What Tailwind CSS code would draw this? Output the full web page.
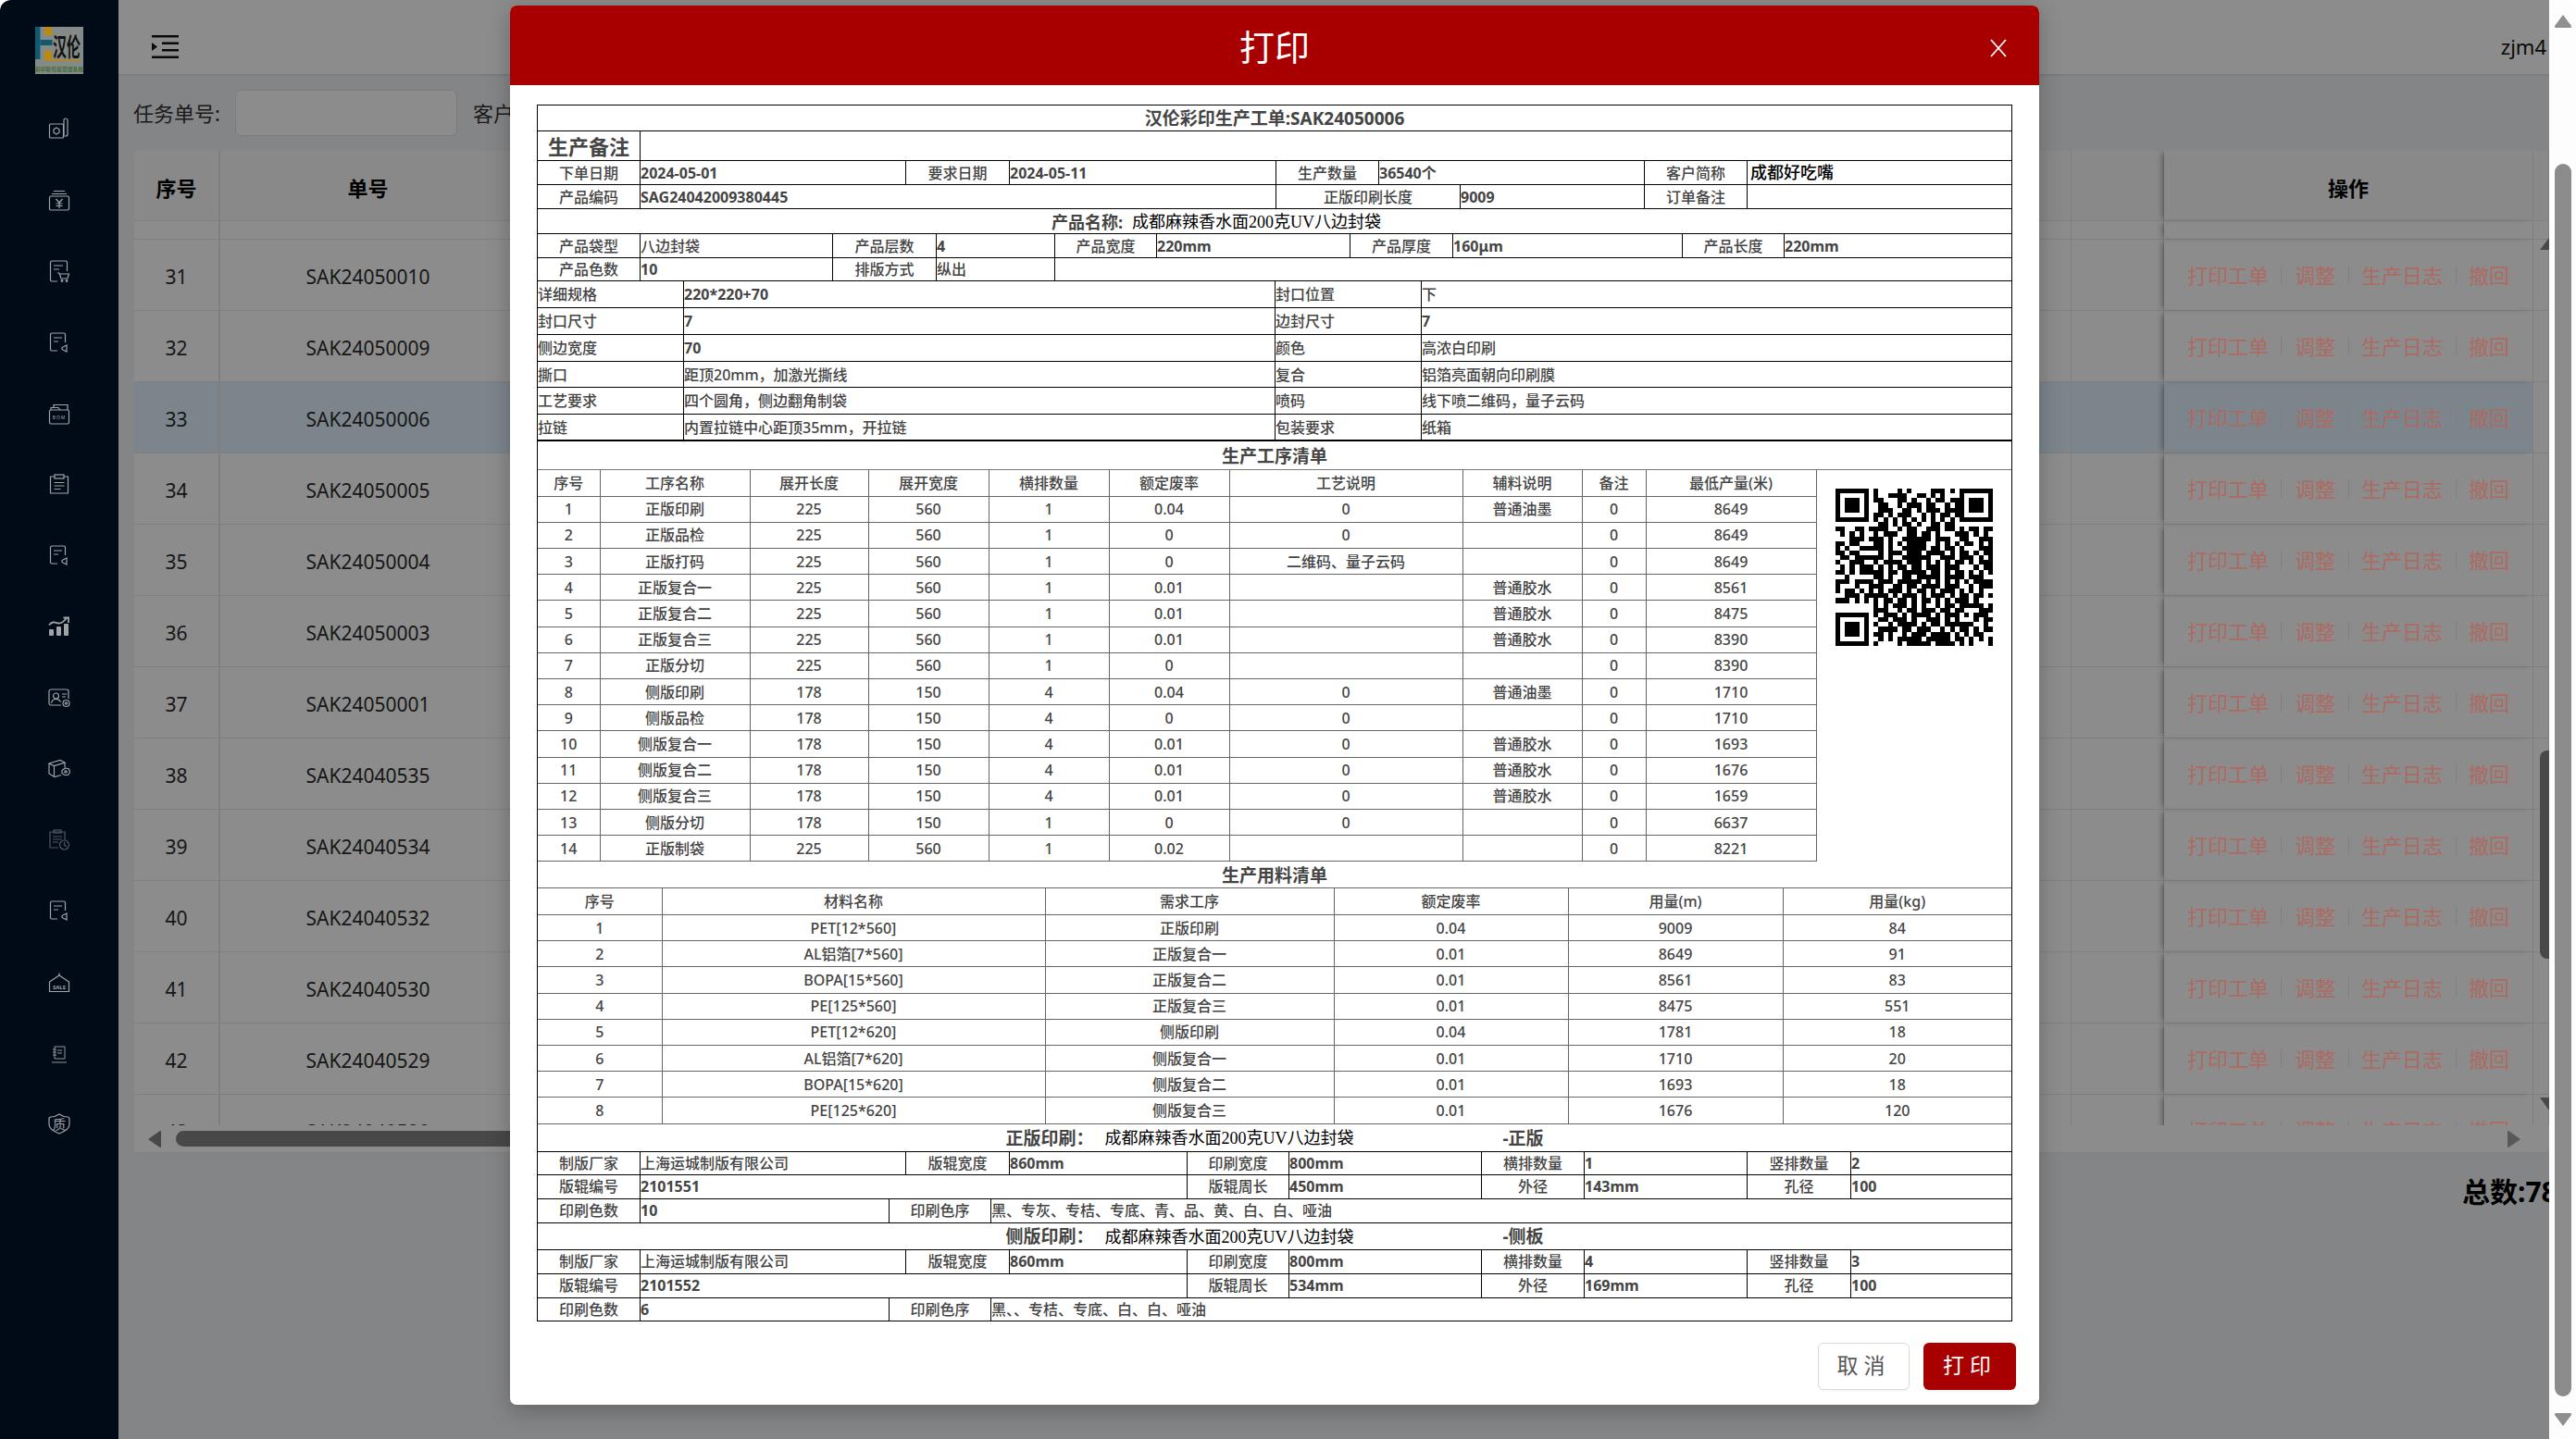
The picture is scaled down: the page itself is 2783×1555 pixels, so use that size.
<!DOCTYPE html>
<html lang="zh-CN">
<head>
<meta charset="UTF-8">
<title>打印</title>
<script src="https://cdn.jsdelivr.net/npm/@tailwindcss/browser@4"></script>
</head>
<body class="bg-white overflow-hidden font-['Noto_Sans','Noto_Sans_CJK_SC',sans-serif]">
<div class="relative flex h-[1555px] w-[2783px] overflow-hidden rounded-tl-[12px] rounded-r-[12px] bg-white">

  <!-- Sidebar -->
  <aside class="flex w-[128px] shrink-0 flex-col items-center bg-[#000b17] pt-[29px]">
    <svg class="h-[51px] w-[52px] shrink-0" viewBox="0 0 52 51">
      <rect width="52" height="51" fill="#868a86"/>
      <rect width="5.500" height="35" fill="#0f5a72"/>
      <rect x="5.500" y="14" width="13" height="6" fill="#0f5a72"/>
      <rect x="10" width="8" height="9" fill="#b98a10"/>
      <rect x="10" y="26" width="8" height="10" fill="#b98a10"/>
      <rect x="10" y="35" width="39" height="1.500" fill="#b98a10"/>
      <text font-size="15" font-weight="700" fill="#111" transform="scale(1 1.800)"><tspan x="19" y="18">汉伦</tspan></text>
      <text x="0" y="48" font-size="5.700" font-weight="700" fill="#3f6d36" textLength="52">彩印软包装管理系统</text>
    </svg>

    <div class="mt-[21px] flex flex-col items-center text-white [&>svg]:my-[26.4px] [&>svg]:h-[24px] [&>svg]:w-[24px] [&>svg]:fill-none [&>svg]:stroke-[#a0a4a8] [&>svg]:stroke-[1.200]">
      <svg viewBox="0 0 24 24"><rect x="1.500" y="7" width="15" height="15" rx="1"/><path d="M16 20h3a2 2 0 0 0 2-2V3a2 2 0 0 0-4 0v16"/><path d="M9 11l3 1.800v3.400L9 18l-3-1.800v-3.400z"/></svg>
      <svg viewBox="0 0 24 24"><rect x="1.500" y="8" width="21" height="15" rx="1.500"/><path d="M4 5.500h16M6 2.500h12"/><path d="M8.500 11l3.500 4 3.500-4M12 15v6M8.500 16h7M8.500 18.500h7"/></svg>
      <svg viewBox="0 0 24 24"><path d="M10 23H4a1.500 1.500 0 0 1-1.500-1.500v-19A1.500 1.500 0 0 1 4 1h15a1.500 1.500 0 0 1 1.500 1.500V12"/><path d="M6 6h10M6 10h6"/><path d="M10 14h2l2 6h7l1.500-5H12.500"/><circle cx="15" cy="22.500" r=".8"/><circle cx="20" cy="22.500" r=".8"/></svg>
      <svg viewBox="0 0 24 24"><path d="M10 21H4a1.500 1.500 0 0 1-1.500-1.500v-16A1.500 1.500 0 0 1 4 2h13a1.500 1.500 0 0 1 1.500 1.500V12"/><path d="M6 7h9M6 11h5"/><path d="M20 15v7l-5-2.500v-2z"/></svg>
      <svg viewBox="0 0 24 24"><rect x="1.500" y="8" width="21" height="15" rx="1.500"/><path d="M3 8V5.500h8l2 2.500M6 5V2.500h15V8"/><text x="12" y="18" font-size="5" text-anchor="middle" fill="#a0a4a8" stroke="none" letter-spacing="1">BOM</text></svg>
      <svg viewBox="0 0 24 24"><path d="M7 4H2.500v18h19V4H17"/><rect x="7" y="2" width="10" height="4"/><path d="M6.500 10.500h11M6.500 14h11M6.500 17.500h7"/></svg>
      <svg viewBox="0 0 24 24"><path d="M10 21H4a1.500 1.500 0 0 1-1.500-1.500v-16A1.500 1.500 0 0 1 4 2h13a1.500 1.500 0 0 1 1.500 1.500V12"/><path d="M6 7h9M6 11h5"/><path d="M20 15v7l-5-2.500v-2z"/></svg>
      <svg viewBox="0 0 24 24"><path d="M1 10.500C5 5.500 8 8 11 8.500s6-2 9-5.500M16.500 2.500H22V8" stroke-width="1.800"/><rect x="1" y="15" width="5" height="7" rx="1" stroke="none" fill="#a0a4a8"/><rect x="9" y="12" width="5" height="10" rx="1" stroke="none" fill="#a0a4a8"/><rect x="17" y="9" width="5" height="13" rx="1" stroke="none" fill="#a0a4a8"/></svg>
      <svg viewBox="0 0 24 24"><path d="M14 20H3a2 2 0 0 1-2-2V5a2 2 0 0 1 2-2h17a2 2 0 0 1 2 2v8"/><circle cx="8.500" cy="10" r="3"/><path d="M3.500 18c.5-3 2.500-4.500 5-4.500s4 1 5 3M15 8h5M15 11h4"/><circle cx="19.500" cy="18" r="3.500"/><circle cx="19.500" cy="18" r="1.200"/></svg>
      <svg viewBox="0 0 24 24"><path d="M1 7l12-3.500 5 2.500-11.500 3.500L1 7zM1 7v11l6 3.500 7-2M6.500 9.500v12M18 6v5"/><path d="M15 14.500l3.500-2.500 4 1 1 3.500-2 3h-4l-2.500-2z"/><circle cx="19" cy="16" r="1.200"/></svg>
      <svg viewBox="0 0 24 24" class="opacity-50"><path d="M11 21H2V4h16v9"/><rect x="6" y="2" width="8" height="3"/><path d="M5 9h10M5 12h10M5 15h6"/><circle cx="17.500" cy="18" r="5"/><path d="M17.500 15v3l2.500 2"/></svg>
      <svg viewBox="0 0 24 24"><path d="M10 21H4a1.500 1.500 0 0 1-1.500-1.500v-16A1.500 1.500 0 0 1 4 2h13a1.500 1.500 0 0 1 1.500 1.500V12"/><path d="M6 7h9M6 11h5"/><path d="M20 15v7l-5-2.500v-2z"/></svg>
      <svg viewBox="0 0 24 24"><path d="M1.500 12l10.500-7 10.500 7v10.500h-21z"/><path d="M12 5V2.500"/><text x="12" y="20" font-size="6" font-weight="700" text-anchor="middle" fill="#a0a4a8" stroke="none">SALE</text></svg>
      <svg viewBox="0 0 24 24"><path d="M7 5h11v13H7zM5 8h4M5 11h4M5 14h4M10 9h5M10 12h5M4 22h16" stroke-width=".9"/></svg>
      <svg viewBox="0 0 24 24"><path d="M3 5c3 0 6-1 9-3 3 2 6 3 9 3 2 0 2 1 2 3v5c0 5-6 8-11 10C7 21 1 18 1 13V8c0-2 0-3 2-3z"/><text x="12" y="17.500" font-size="14" text-anchor="middle" fill="#a0a4a8" stroke="none">质</text></svg>
    </div>
  </aside>

  <!-- Main page, dimmed by the modal mask -->
  <main class="flex h-full w-[2626px] shrink-0 flex-col overflow-hidden bg-[#848586]">
    <header class="flex h-[80px] shrink-0 items-center justify-between bg-[#8c8c8c] pl-[36px] pr-[3px] pt-[20px] shadow-[0_1px_3px_rgba(0,0,0,0.12)]">
      <svg class="h-[25px] w-[29px]" viewBox="0 0 29 25" fill="#0a0a0a">
        <rect width="29" height="2.500"/><rect x="11" y="7.500" width="18" height="2.500"/><rect x="11" y="15" width="18" height="2.500"/><rect y="22.500" width="29" height="2.500"/><path d="M0 8l6 4.500L0 17z"/>
      </svg>
      <span class="text-[22px] text-[#0a0a0a]">zjm4</span>
    </header>

    <div class="flex h-[83px] shrink-0 items-start pl-[16px] pt-[17px] text-[22px] text-[#1a1a1a]">
      <label class="flex h-[50px] items-center">任务单号:</label>
      <input class="ml-[16px] h-[50px] w-[240px] rounded-[6px] border border-[#7a7b7c] bg-[#8c8c8c]">
      <label class="ml-[17px] flex h-[50px] items-center">客户名称:</label>
    </div>

    <section class="relative ml-[17px] h-[1083px] w-[2609px] shrink-0 border-b border-[#7f8081] bg-[#8c8c8c]">
      <div class="h-[1053px] overflow-hidden text-[21px] text-[#161616] [&>div]:grid [&>div]:grid-cols-[93px_320px_1680px_100px_399px_17px] [&>div>div]:flex [&>div>div]:items-center [&>div>div]:justify-center [&>div>div]:border-b [&>div>div]:border-r [&>div>div]:border-[#7f7f7f] [&>div>div:first-child]:border-r-[2px] [&>div>div:nth-child(-n+2)]:pt-[6px]">
        <div class="h-[76px] bg-[#898989] text-[22px] font-bold text-black">
          <div>序号</div><div>单号</div><div></div><div></div><div class="pt-[6px] shadow-[-5px_0_6px_-3px_rgba(0,0,0,0.35)]">操作</div><div></div>
        </div>
        <div class="h-[20px]"><div></div><div></div><div></div><div></div><div class="shadow-[-5px_0_6px_-3px_rgba(0,0,0,0.35)]"></div><div></div></div>
        <div class="h-[77px]"><div>31</div><div>SAK24050010</div><div></div><div></div><div class="shadow-[-5px_0_6px_-3px_rgba(0,0,0,0.35)] text-[22px] text-[#ad6a62] [&>i]:mx-[13.5px] [&>i]:h-[20px] [&>i]:w-px [&>i]:bg-[#7f7f7f]"><span>打印工单</span><i></i><span>调整</span><i></i><span>生产日志</span><i></i><span>撤回</span></div><div></div></div>
        <div class="h-[77px]"><div>32</div><div>SAK24050009</div><div></div><div></div><div class="shadow-[-5px_0_6px_-3px_rgba(0,0,0,0.35)] text-[22px] text-[#ad6a62] [&>i]:mx-[13.5px] [&>i]:h-[20px] [&>i]:w-px [&>i]:bg-[#7f7f7f]"><span>打印工单</span><i></i><span>调整</span><i></i><span>生产日志</span><i></i><span>撤回</span></div><div></div></div>
        <div class="h-[77px] bg-[#7c858c]"><div>33</div><div>SAK24050006</div><div></div><div></div><div class="shadow-[-5px_0_6px_-3px_rgba(0,0,0,0.35)] text-[22px] text-[#ad6a62] [&>i]:mx-[13.5px] [&>i]:h-[20px] [&>i]:w-px [&>i]:bg-[#7f7f7f]"><span>打印工单</span><i></i><span>调整</span><i></i><span>生产日志</span><i></i><span>撤回</span></div><div class="bg-[#8c8c8c]"></div></div>
        <div class="h-[77px]"><div>34</div><div>SAK24050005</div><div></div><div></div><div class="shadow-[-5px_0_6px_-3px_rgba(0,0,0,0.35)] text-[22px] text-[#ad6a62] [&>i]:mx-[13.5px] [&>i]:h-[20px] [&>i]:w-px [&>i]:bg-[#7f7f7f]"><span>打印工单</span><i></i><span>调整</span><i></i><span>生产日志</span><i></i><span>撤回</span></div><div></div></div>
        <div class="h-[77px]"><div>35</div><div>SAK24050004</div><div></div><div></div><div class="shadow-[-5px_0_6px_-3px_rgba(0,0,0,0.35)] text-[22px] text-[#ad6a62] [&>i]:mx-[13.5px] [&>i]:h-[20px] [&>i]:w-px [&>i]:bg-[#7f7f7f]"><span>打印工单</span><i></i><span>调整</span><i></i><span>生产日志</span><i></i><span>撤回</span></div><div></div></div>
        <div class="h-[77px]"><div>36</div><div>SAK24050003</div><div></div><div></div><div class="shadow-[-5px_0_6px_-3px_rgba(0,0,0,0.35)] text-[22px] text-[#ad6a62] [&>i]:mx-[13.5px] [&>i]:h-[20px] [&>i]:w-px [&>i]:bg-[#7f7f7f]"><span>打印工单</span><i></i><span>调整</span><i></i><span>生产日志</span><i></i><span>撤回</span></div><div></div></div>
        <div class="h-[77px]"><div>37</div><div>SAK24050001</div><div></div><div></div><div class="shadow-[-5px_0_6px_-3px_rgba(0,0,0,0.35)] text-[22px] text-[#ad6a62] [&>i]:mx-[13.5px] [&>i]:h-[20px] [&>i]:w-px [&>i]:bg-[#7f7f7f]"><span>打印工单</span><i></i><span>调整</span><i></i><span>生产日志</span><i></i><span>撤回</span></div><div></div></div>
        <div class="h-[77px]"><div>38</div><div>SAK24040535</div><div></div><div></div><div class="shadow-[-5px_0_6px_-3px_rgba(0,0,0,0.35)] text-[22px] text-[#ad6a62] [&>i]:mx-[13.5px] [&>i]:h-[20px] [&>i]:w-px [&>i]:bg-[#7f7f7f]"><span>打印工单</span><i></i><span>调整</span><i></i><span>生产日志</span><i></i><span>撤回</span></div><div></div></div>
        <div class="h-[77px]"><div>39</div><div>SAK24040534</div><div></div><div></div><div class="shadow-[-5px_0_6px_-3px_rgba(0,0,0,0.35)] text-[22px] text-[#ad6a62] [&>i]:mx-[13.5px] [&>i]:h-[20px] [&>i]:w-px [&>i]:bg-[#7f7f7f]"><span>打印工单</span><i></i><span>调整</span><i></i><span>生产日志</span><i></i><span>撤回</span></div><div></div></div>
        <div class="h-[77px]"><div>40</div><div>SAK24040532</div><div></div><div></div><div class="shadow-[-5px_0_6px_-3px_rgba(0,0,0,0.35)] text-[22px] text-[#ad6a62] [&>i]:mx-[13.5px] [&>i]:h-[20px] [&>i]:w-px [&>i]:bg-[#7f7f7f]"><span>打印工单</span><i></i><span>调整</span><i></i><span>生产日志</span><i></i><span>撤回</span></div><div></div></div>
        <div class="h-[77px]"><div>41</div><div>SAK24040530</div><div></div><div></div><div class="shadow-[-5px_0_6px_-3px_rgba(0,0,0,0.35)] text-[22px] text-[#ad6a62] [&>i]:mx-[13.5px] [&>i]:h-[20px] [&>i]:w-px [&>i]:bg-[#7f7f7f]"><span>打印工单</span><i></i><span>调整</span><i></i><span>生产日志</span><i></i><span>撤回</span></div><div></div></div>
        <div class="h-[77px]"><div>42</div><div>SAK24040529</div><div></div><div></div><div class="shadow-[-5px_0_6px_-3px_rgba(0,0,0,0.35)] text-[22px] text-[#ad6a62] [&>i]:mx-[13.5px] [&>i]:h-[20px] [&>i]:w-px [&>i]:bg-[#7f7f7f]"><span>打印工单</span><i></i><span>调整</span><i></i><span>生产日志</span><i></i><span>撤回</span></div><div></div></div>
        <div class="h-[77px]"><div>43</div><div>SAK24040528</div><div></div><div></div><div class="shadow-[-5px_0_6px_-3px_rgba(0,0,0,0.35)] text-[22px] text-[#ad6a62] [&>i]:mx-[13.5px] [&>i]:h-[20px] [&>i]:w-px [&>i]:bg-[#7f7f7f]"><span>打印工单</span><i></i><span>调整</span><i></i><span>生产日志</span><i></i><span>撤回</span></div><div></div></div>
      </div>

      <!-- table scrollbars -->
      <svg class="absolute left-[2599px] top-[94px] h-[13px] w-[10px]" viewBox="0 0 10 13"><path d="M0 13L10 0v13z" fill="#484848"/></svg>
      <div class="absolute left-[2599px] top-[648px] h-[225px] w-[10px] rounded-l-[8px] bg-[#484848]"></div>
      <svg class="absolute left-[2599px] top-[1023px] h-[14px] w-[10px]" viewBox="0 0 10 14"><path d="M0 0h10v14z" fill="#484848"/></svg>
      <div class="flex h-[29px] items-center pl-[15px]">
        <svg class="h-[18px] w-[14px]" viewBox="0 0 14 18"><path d="M14 1v16a1 1 0 0 1-1.500.8L0 9 12.500.2A1 1 0 0 1 14 1z" fill="#484848"/></svg>
        <div class="ml-[16px] h-[17px] w-[800px] rounded-full bg-[#484848]"></div>
        <svg class="ml-[1719px] h-[18px] w-[14px]" viewBox="0 0 14 18"><path d="M0 1v16a1 1 0 0 0 1.500.8L14 9 1.500.2A1 1 0 0 0 0 1z" fill="#585858"/></svg>
      </div>
    </section>

    <div class="flex shrink-0 justify-end overflow-hidden pt-[22px]">
      <span class="w-[94px] whitespace-nowrap text-[30px] font-bold leading-[40px] text-black">总数:78</span>
    </div>
  </main>

  <!-- Window scrollbar -->
  <div class="relative w-[29px] shrink-0 bg-[#fdfdfd]">
    <svg class="absolute left-[6px] top-[16px] h-[14px] w-[18px]" viewBox="0 0 18 14"><path d="M9 0l9 12q.5 2-1.500 2h-15q-2 0-1.500-2z" fill="#8f8f8f"/></svg>
    <div class="absolute left-[6px] top-[177px] h-[1332px] w-[18px] rounded-full bg-[#8c8c8c]"></div>
    <svg class="absolute left-[6px] top-[1527px] h-[14px] w-[18px]" viewBox="0 0 18 14"><path d="M9 14L0 2Q-.5 0 1.500 0h15q2 0 1.500 2z" fill="#8f8f8f"/></svg>
  </div>

  <!-- Print modal -->
  <div class="absolute left-[551px] top-[6px] h-[1512px] w-[1652px] overflow-hidden rounded-[7px] bg-white shadow-[0_6px_24px_rgba(0,0,0,0.25)]">
    <div class="relative flex h-[86px] items-center justify-center bg-[#a80000] pt-[3px] text-[38px] text-white">
      打印
      <svg class="absolute right-[35px] top-[36px] h-[20px] w-[18px]" viewBox="0 0 18 20" fill="none" stroke="#fff" stroke-width="1.800"><path d="M1 1l16 18M17 1L1 19"/></svg>
    </div>
    <div class="px-[29px] pt-[21px]">
      <div class="w-[1594px] border-x border-t border-black text-[16px] font-medium leading-none text-[#444] [&>div>div]:flex [&>div>div]:items-center [&>div>div]:border-r [&>div>div]:border-black [&>div>div:last-child]:border-r-0">
        <div class="grid h-[28px] grid-cols-1 border-b border-black"><div class="justify-center pt-[2px] text-[19px] font-bold text-[#444]">汉伦彩印生产工单:SAK24050006</div></div>
        <div class="grid h-[32px] grid-cols-[111px_1fr] border-b border-black"><div class="justify-center text-[22px] font-bold">生产备注</div><div></div></div>
        <div class="grid h-[26px] grid-cols-[111px_287px_112px_288px_111px_287px_111px_1fr] border-b border-black"><div class="justify-center">下单日期</div><div class="font-bold">2024-05-01</div><div class="justify-center">要求日期</div><div class="font-bold">2024-05-11</div><div class="justify-center">生产数量</div><div class="font-bold">36540个</div><div class="justify-center">客户简称</div><div class="pl-[3px] font-['Liberation_Serif','Noto_Sans_CJK_SC',serif] text-[18px] text-black">成都好吃嘴</div></div>
        <div class="grid h-[26px] grid-cols-[111px_687px_199px_199px_111px_1fr] border-b border-black"><div class="justify-center">产品编码</div><div class="font-bold">SAG24042009380445</div><div class="justify-center">正版印刷长度</div><div class="font-bold">9009</div><div class="justify-center">订单备注</div><div></div></div>
        <div class="grid h-[27px] grid-cols-1 border-b border-black"><div class="justify-center pr-[126px] pt-[1px] text-[18px]"><b>产品名称:</b><span class="ml-[10px] font-['Liberation_Serif','Noto_Sans_CJK_SC',serif] font-normal text-black">成都麻辣香水面200克UV八边封袋</span></div></div>
        <div class="grid h-[26px] grid-cols-[111px_208px_112px_128px_110px_209px_111px_248px_110px_1fr] border-b border-black"><div class="justify-center">产品袋型</div><div>八边封袋</div><div class="justify-center">产品层数</div><div class="font-bold">4</div><div class="justify-center">产品宽度</div><div class="font-bold">220mm</div><div class="justify-center">产品厚度</div><div class="font-bold">160μm</div><div class="justify-center">产品长度</div><div class="font-bold">220mm</div></div>
        <div class="grid h-[25px] grid-cols-[111px_208px_112px_128px_1fr] border-b border-black"><div class="justify-center">产品色数</div><div class="font-bold">10</div><div class="justify-center">排版方式</div><div>纵出</div><div></div></div>
        <div class="grid h-[29px] grid-cols-[158px_639px_158px_1fr] border-b border-black"><div>详细规格</div><div class="font-bold">220*220+70</div><div>封口位置</div><div>下</div></div>
        <div class="grid h-[29px] grid-cols-[158px_639px_158px_1fr] border-b border-black"><div>封口尺寸</div><div class="font-bold">7</div><div>边封尺寸</div><div class="font-bold">7</div></div>
        <div class="grid h-[29px] grid-cols-[158px_639px_158px_1fr] border-b border-black"><div>侧边宽度</div><div class="font-bold">70</div><div>颜色</div><div>高浓白印刷</div></div>
        <div class="grid h-[28px] grid-cols-[158px_639px_158px_1fr] border-b border-black"><div>撕口</div><div>距顶20mm，加激光撕线</div><div>复合</div><div>铝箔亮面朝向印刷膜</div></div>
        <div class="grid h-[29px] grid-cols-[158px_639px_158px_1fr] border-b border-black"><div>工艺要求</div><div>四个圆角，侧边翻角制袋</div><div>喷码</div><div>线下喷二维码，量子云码</div></div>
        <div class="grid h-[29px] grid-cols-[158px_639px_158px_1fr] border-b-2 border-black"><div>拉链</div><div>内置拉链中心距顶35mm，开拉链</div><div>包装要求</div><div>纸箱</div></div>
        <div class="grid h-[31px] grid-cols-1 border-b border-[#777]"><div class="justify-center pt-[3px] text-[19px] font-bold">生产工序清单</div></div>

        <section class="flex items-start">
          <table class="w-[1381px] shrink-0 table-fixed border-collapse text-center [&_td]:border [&_td]:border-[#666] [&_td]:p-0 [&_td:first-child]:border-l-0 [&_tr]:h-[28.2px] [&_tr:first-child_td]:border-t-0">
            <colgroup><col class="w-[67px]"><col class="w-[162px]"><col class="w-[128px]"><col class="w-[130px]"><col class="w-[130px]"><col class="w-[130px]"><col class="w-[252px]"><col class="w-[129px]"><col class="w-[69px]"><col class="w-[184px]"></colgroup>
            <tr><td>序号</td><td>工序名称</td><td>展开长度</td><td>展开宽度</td><td>横排数量</td><td>额定废率</td><td>工艺说明</td><td>辅料说明</td><td>备注</td><td>最低产量(米)</td></tr>
            <tr><td>1</td><td>正版印刷</td><td>225</td><td>560</td><td>1</td><td>0.04</td><td>0</td><td>普通油墨</td><td>0</td><td>8649</td></tr>
            <tr><td>2</td><td>正版品检</td><td>225</td><td>560</td><td>1</td><td>0</td><td>0</td><td></td><td>0</td><td>8649</td></tr>
            <tr><td>3</td><td>正版打码</td><td>225</td><td>560</td><td>1</td><td>0</td><td>二维码、量子云码</td><td></td><td>0</td><td>8649</td></tr>
            <tr><td>4</td><td>正版复合一</td><td>225</td><td>560</td><td>1</td><td>0.01</td><td></td><td>普通胶水</td><td>0</td><td>8561</td></tr>
            <tr><td>5</td><td>正版复合二</td><td>225</td><td>560</td><td>1</td><td>0.01</td><td></td><td>普通胶水</td><td>0</td><td>8475</td></tr>
            <tr><td>6</td><td>正版复合三</td><td>225</td><td>560</td><td>1</td><td>0.01</td><td></td><td>普通胶水</td><td>0</td><td>8390</td></tr>
            <tr><td>7</td><td>正版分切</td><td>225</td><td>560</td><td>1</td><td>0</td><td></td><td></td><td>0</td><td>8390</td></tr>
            <tr><td>8</td><td>侧版印刷</td><td>178</td><td>150</td><td>4</td><td>0.04</td><td>0</td><td>普通油墨</td><td>0</td><td>1710</td></tr>
            <tr><td>9</td><td>侧版品检</td><td>178</td><td>150</td><td>4</td><td>0</td><td>0</td><td></td><td>0</td><td>1710</td></tr>
            <tr><td>10</td><td>侧版复合一</td><td>178</td><td>150</td><td>4</td><td>0.01</td><td>0</td><td>普通胶水</td><td>0</td><td>1693</td></tr>
            <tr><td>11</td><td>侧版复合二</td><td>178</td><td>150</td><td>4</td><td>0.01</td><td>0</td><td>普通胶水</td><td>0</td><td>1676</td></tr>
            <tr><td>12</td><td>侧版复合三</td><td>178</td><td>150</td><td>4</td><td>0.01</td><td>0</td><td>普通胶水</td><td>0</td><td>1659</td></tr>
            <tr><td>13</td><td>侧版分切</td><td>178</td><td>150</td><td>1</td><td>0</td><td>0</td><td></td><td>0</td><td>6637</td></tr>
            <tr><td>14</td><td>正版制袋</td><td>225</td><td>560</td><td>1</td><td>0.02</td><td></td><td></td><td>0</td><td>8221</td></tr>
          </table>
          <svg id="qr" class="ml-[20px] mt-[20px] h-[170px] w-[170px] shrink-0" viewBox="0 0 33 33" shape-rendering="crispEdges"><path id="qr-path" fill="#000"/></svg>
        </section>

        <div class="grid h-[29px] grid-cols-1 border-b border-[#666]"><div class="justify-center pt-[2px] text-[19px] font-bold">生产用料清单</div></div>
        <table class="w-full table-fixed border-collapse text-center [&_td]:border [&_td]:border-[#666] [&_td]:p-0 [&_td:first-child]:border-l-0 [&_td:last-child]:border-r-0 [&_tr]:h-[28.2px] [&_tr:first-child_td]:border-t-0">
          <colgroup><col class="w-[134px]"><col class="w-[414px]"><col class="w-[312px]"><col class="w-[253px]"><col class="w-[232px]"><col></colgroup>
          <tr><td>序号</td><td>材料名称</td><td>需求工序</td><td>额定废率</td><td>用量(m)</td><td>用量(kg)</td></tr>
          <tr><td>1</td><td>PET[12*560]</td><td>正版印刷</td><td>0.04</td><td>9009</td><td>84</td></tr>
          <tr><td>2</td><td>AL铝箔[7*560]</td><td>正版复合一</td><td>0.01</td><td>8649</td><td>91</td></tr>
          <tr><td>3</td><td>BOPA[15*560]</td><td>正版复合二</td><td>0.01</td><td>8561</td><td>83</td></tr>
          <tr><td>4</td><td>PE[125*560]</td><td>正版复合三</td><td>0.01</td><td>8475</td><td>551</td></tr>
          <tr><td>5</td><td>PET[12*620]</td><td>侧版印刷</td><td>0.04</td><td>1781</td><td>18</td></tr>
          <tr><td>6</td><td>AL铝箔[7*620]</td><td>侧版复合一</td><td>0.01</td><td>1710</td><td>20</td></tr>
          <tr><td>7</td><td>BOPA[15*620]</td><td>侧版复合二</td><td>0.01</td><td>1693</td><td>18</td></tr>
          <tr><td>8</td><td>PE[125*620]</td><td>侧版复合三</td><td>0.01</td><td>1676</td><td>120</td></tr>
        </table>

        <div class="grid h-[30px] grid-cols-1 border-b border-black"><div class="justify-center pt-[2px] text-[19px] font-bold"><span>正版印刷：</span><span class="ml-[12px] font-['Liberation_Serif','Noto_Sans_CJK_SC',serif] text-[18px] font-normal text-black">成都麻辣香水面200克UV八边封袋</span><span class="ml-[161px]">-正版</span></div></div>
        <div class="grid h-[25px] grid-cols-[111px_287px_112px_192px_110px_208px_111px_176px_112px_1fr] border-b border-black"><div class="justify-center">制版厂家</div><div>上海运城制版有限公司</div><div class="justify-center">版辊宽度</div><div class="font-bold">860mm</div><div class="justify-center">印刷宽度</div><div class="font-bold">800mm</div><div class="justify-center">横排数量</div><div class="font-bold">1</div><div class="justify-center">竖排数量</div><div class="font-bold">2</div></div>
        <div class="grid h-[26px] grid-cols-[111px_591px_110px_208px_111px_176px_112px_1fr] border-b border-black"><div class="justify-center">版辊编号</div><div class="font-bold">2101551</div><div class="justify-center">版辊周长</div><div class="font-bold">450mm</div><div class="justify-center">外径</div><div class="font-bold">143mm</div><div class="justify-center">孔径</div><div class="font-bold">100</div></div>
        <div class="grid h-[26px] grid-cols-[111px_269px_110px_1fr] border-b border-black"><div class="justify-center">印刷色数</div><div class="font-bold">10</div><div class="justify-center">印刷色序</div><div>黑、专灰、专桔、专底、青、品、黄、白、白、哑油</div></div>
        <div class="grid h-[29px] grid-cols-1 border-b border-black"><div class="justify-center pt-[2px] text-[19px] font-bold"><span>侧版印刷：</span><span class="ml-[12px] font-['Liberation_Serif','Noto_Sans_CJK_SC',serif] text-[18px] font-normal text-black">成都麻辣香水面200克UV八边封袋</span><span class="ml-[161px]">-侧板</span></div></div>
        <div class="grid h-[26px] grid-cols-[111px_287px_112px_192px_110px_208px_111px_176px_112px_1fr] border-b border-black"><div class="justify-center">制版厂家</div><div>上海运城制版有限公司</div><div class="justify-center">版辊宽度</div><div class="font-bold">860mm</div><div class="justify-center">印刷宽度</div><div class="font-bold">800mm</div><div class="justify-center">横排数量</div><div class="font-bold">4</div><div class="justify-center">竖排数量</div><div class="font-bold">3</div></div>
        <div class="grid h-[26px] grid-cols-[111px_591px_110px_208px_111px_176px_112px_1fr] border-b border-black"><div class="justify-center">版辊编号</div><div class="font-bold">2101552</div><div class="justify-center">版辊周长</div><div class="font-bold">534mm</div><div class="justify-center">外径</div><div class="font-bold">169mm</div><div class="justify-center">孔径</div><div class="font-bold">100</div></div>
        <div class="grid h-[25px] grid-cols-[111px_269px_110px_1fr] border-b border-black"><div class="justify-center">印刷色数</div><div class="font-bold">6</div><div class="justify-center">印刷色序</div><div>黑、、专桔、专底、白、白、哑油</div></div>
      </div>

      <div class="mt-[23px] flex w-[1598px] justify-end gap-[15px] text-[23px]">
        <button class="h-[51px] w-[99px] rounded-[6px] border border-[#d9d9d9] bg-white pb-[2px] tracking-[6px] text-[#555] shadow-[0_2px_2px_rgba(0,0,0,0.03)]">取消</button>
        <button class="h-[51px] w-[100px] rounded-[6px] bg-[#a80000] pb-[2px] tracking-[6px] text-white shadow-[0_2px_2px_rgba(0,0,0,0.05)]">打印</button>
      </div>
    </div>
  </div>
</div>

<script>
  // QR modules, read off the reference; finder squares are stamped over them afterwards
  const rows = [
    '........#....#.#....###.#........',
    '........#..####..##.#.#..........',
    '........##...##.#..#.##.##.......',
    '.........##..#.###.##..#.#.......',
    '.........###..##.#.###.###.......',
    '........##.#.###..#.#.##.#.......',
    '........#.#.#.#.#.#.#.#.#........',
    '.........##.#.##.#..##.##........',
    '##..##.####..#.##..###.##.#.##.##',
    '.#.#.#..#.###..##.##.#...###.#.#.',
    '...###.###.#..######.###..##..###',
    '##.##...##.#.#.####..#.#.#.##.#.#',
    '#.#..#####.#..#####.##.##.#...###',
    '##.##....#.###.###.####.#.##.#.##',
    '.##.######.#..######..###.###.#.#',
    '#..###..#.####.###.#.#.#.##.#.###',
    '.#.#.###.#.#.##.##.###.###...#.##',
    '##.#.#####.##.#####.##.#.##.#.#.#',
    '..#.....##.#..##.#####.####.###..',
    '###.####.###.#####.#.#.#.#.#.####',
    '#...#..###..##.##.####.###..#.###',
    '#.##.#.#.#.###.#.##.#.###.#.#.#..',
    '..###.#####.#.###.#.###.#.##.##.#',
    '###.#.#.#.##.##.#.##.#.#.###.#...',
    '........#.#.###.#.#..#.##.#####.#',
    '........###..#.##.###.##.##...###',
    '........#.###.#.####.#.###.#.###.',
    '.........##.###.#..###.#.#...#.##',
    '........#..#.####.#.##.######..#.',
    '.........####.##.###..#.#.##.#.##',
    '........##.#..#.###.####.#.#.##..',
    '.........#.#.#####.#####.##.#.#.#',
    '........#....#.#####.####.#.#...#'
  ];
  let d = '';
  rows.forEach((row, y) => {
    [...row.slice(0, 33)].forEach((c, x) => { if (c === '#') d += `M${x} ${y}h1v1h-1z`; });
  });
  const finder = (x, y) => `M${x} ${y}h7v7h-7zM${x + 1} ${y + 1}v5h5v-5zM${x + 2} ${y + 2}h3v3h-3z`;
  d += finder(0, 0) + finder(26, 0) + finder(0, 26);
  const qrPath = document.getElementById('qr-path');
  qrPath.setAttribute('d', d);
  qrPath.setAttribute('fill-rule', 'evenodd');
</script>
</body>
</html>
